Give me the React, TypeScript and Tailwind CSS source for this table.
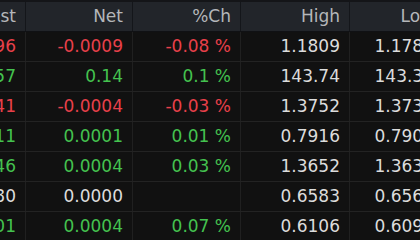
import React from "react";

type C = "r" | "g" | "w";
const rows: { last: string; lc: C; net: string; nc: C; pct: string; high: string; low: string }[] = [
  { last: "1.1796", lc: "r", net: "-0.0009", nc: "r", pct: "-0.08 %", high: "1.1809", low: "1.1787" },
  { last: "143.57", lc: "g", net: "0.14", nc: "g", pct: "0.1 %", high: "143.74", low: "143.32" },
  { last: "1.3741", lc: "r", net: "-0.0004", nc: "r", pct: "-0.03 %", high: "1.3752", low: "1.3735" },
  { last: "0.7911", lc: "g", net: "0.0001", nc: "g", pct: "0.01 %", high: "0.7916", low: "0.7905" },
  { last: "1.3646", lc: "g", net: "0.0004", nc: "g", pct: "0.03 %", high: "1.3652", low: "1.3634" },
  { last: "0.6580", lc: "w", net: "0.0000", nc: "w", pct: "", high: "0.6583", low: "0.6562" },
  { last: "0.6101", lc: "g", net: "0.0004", nc: "g", pct: "0.07 %", high: "0.6106", low: "0.6095" },
];

const color = (c: C) =>
  c === "r" ? "text-[#e8404a]" : c === "g" ? "text-[#44c24f]" : "text-[#dcdcdc]";

const widths = ["w-[26px]", "w-[107px]", "w-[108px]", "w-[109px]", "w-[94px]"];

function Cell({ i, children, cls, header }: { i: number; children: React.ReactNode; cls: string; header?: boolean }) {
  return (
    <div
      className={`${widths[i]} shrink-0 flex items-center justify-end pr-[9px] overflow-hidden whitespace-nowrap border-r ${
        header ? "border-[#14161a]" : "border-[#202020]"
      } ${cls}`}
    >
      {children}
    </div>
  );
}

export default function App() {
  return (
    <div
      className="w-[420px] h-[240px] overflow-hidden bg-[#0f0f0f] text-[17px] leading-none"
      style={{ fontFamily: '"DejaVu Sans", Verdana, sans-serif' }}
    >
      <div className="w-[480px]">
        <div className="flex h-[32px] bg-[#22252a] border-t-2 border-b border-t-[#141518] border-b-[#101114] text-[#b4b6b9]">
          <Cell i={0} cls="" header>Last</Cell>
          <Cell i={1} cls="" header>Net</Cell>
          <Cell i={2} cls="" header>%Ch</Cell>
          <Cell i={3} cls="" header>High</Cell>
          <Cell i={4} cls="" header>Low</Cell>
        </div>
        {rows.map((r, k) => (
          <div key={k} className="flex h-[30px] border-b border-[#232323] bg-[#111111]">
            <Cell i={0} cls={color(r.lc)}>{r.last}</Cell>
            <Cell i={1} cls={color(r.nc)}>{r.net}</Cell>
            <Cell i={2} cls={color(r.nc)}>{r.pct}</Cell>
            <Cell i={3} cls="text-[#dcdcdc]">{r.high}</Cell>
            <Cell i={4} cls="text-[#dcdcdc]">{r.low}</Cell>
          </div>
        ))}
      </div>
    </div>
  );
}
